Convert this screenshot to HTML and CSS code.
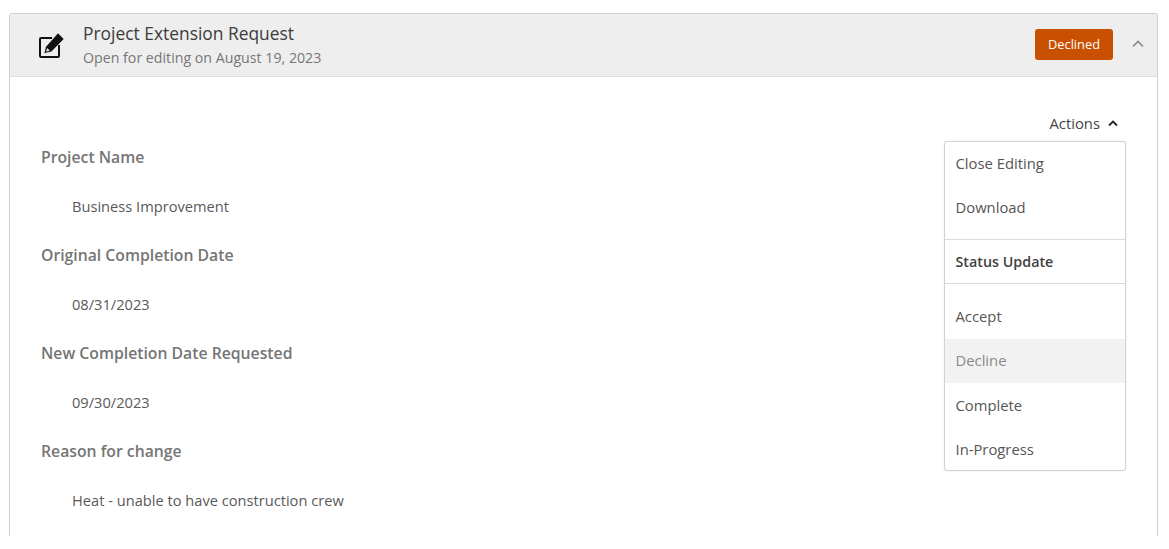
FILE: index.html

```html
<!DOCTYPE html>
<html>
<head>
    <meta charset="utf-8">
    <title>Project Extension Request</title>
    <link rel="stylesheet" href="styles.css">
</head>
<body>
    <div class="card">
        <div class="card-header">
            <svg class="edit-icon" width="27" height="27" viewBox="0 0 27 27">
                <path d="M14 6H3a1 1 0 0 0-1 1v17a1 1 0 0 0 1 1h17a1 1 0 0 0 1-1V13" fill="none" stroke="#111" stroke-width="2"/>
                <path d="M6 21.500l1.700-6.700L20 1l6 6-12.500 12.800zM8.500 19.300l2.800-.8-2-2z" fill="#111" stroke="#eee" stroke-width=".6" fill-rule="evenodd"/>
            </svg>
            <div class="title-block">
                <div class="title">Project Extension Request</div>
                <div class="subtitle">Open for editing on August 19, 2023</div>
            </div>
            <span class="badge">Declined</span>
            <svg class="chevron" width="12" height="8" viewBox="0 0 12 8">
                <path d="M1 6.500l5-5 5 5" fill="none" stroke="#888" stroke-width="1.600"/>
            </svg>
        </div>
        <div class="card-body">
            <div class="actions">
                Actions
                <svg width="10" height="7" viewBox="0 0 10 7">
                    <path d="M1 5.500l4-4 4 4" fill="none" stroke="#222" stroke-width="1.800"/>
                </svg>
            </div>
            <div class="menu">
                <div class="menu-group">
                    <div class="menu-item first">Close Editing</div>
                    <div class="menu-item first">Download</div>
                </div>
                <div class="menu-heading">Status Update</div>
                <div class="menu-group status">
                    <div class="menu-item">Accept</div>
                    <div class="menu-item active">Decline</div>
                    <div class="menu-item lower">Complete</div>
                    <div class="menu-item lower">In-Progress</div>
                </div>
            </div>
            <div class="field-label">Project Name</div>
            <div class="field-value">Business Improvement</div>
            <div class="field-label">Original Completion Date</div>
            <div class="field-value">08/31/2023</div>
            <div class="field-label">New Completion Date Requested</div>
            <div class="field-value">09/30/2023</div>
            <div class="field-label">Reason for change</div>
            <div class="field-value">Heat - unable to have construction crew</div>
        </div>
    </div>
</body>
</html>
```

FILE: styles.css

```css
body {
    margin: 0;
    padding: 13px 11px 13px 9px;
    background: #fff;
    font-family: "Open Sans", "Lato", sans-serif;
    color: #4a4a4a;
}
.card {
    height: 523px;
    box-sizing: border-box;
    border: 1px solid #d0d0d0;
    border-bottom: 0;
    border-radius: 3px 3px 0 0;
}
.card-header {
    display: flex;
    align-items: center;
    height: 60px;
    padding: 0 13px 2px 28px;
    background: #eeeeee;
    border-bottom: 1px solid #dedede;
}
.edit-icon {
    flex: none;
    margin: 2px 18px 0 0;
}
.title-block {
    flex: 1;
    margin-top: 2px;
}
.title {
    font-size: 17.400px;
    line-height: 20px;
    font-weight: 500;
    color: #3c3c3c;
}
.subtitle {
    font-size: 14.200px;
    line-height: 21px;
    margin-top: 4px;
    color: #777;
}
.badge {
    width: 78px;
    height: 31px;
    line-height: 31px;
    text-align: center;
    border-radius: 3px;
    background: #c85000;
    color: #fff;
    font-size: 12.800px;
    font-weight: 500;
}
.chevron {
    margin-left: 19px;
}
.card-body {
    position: relative;
    padding: 70px 31px 0;
}
.actions {
    position: absolute;
    top: 37px;
    right: 39px;
    display: flex;
    align-items: center;
    gap: 8px;
    font-size: 14.800px;
    line-height: 18px;
    color: #444;
}
.menu {
    position: absolute;
    top: 64px;
    right: 31px;
    width: 180px;
    background: #fff;
    border: 1px solid #d2d2d2;
    border-radius: 3px;
    box-shadow: 0 0 2px #e6e6e6;
    font-size: 14.800px;
}
.menu-group {
    padding-bottom: 8px;
}
.menu-item {
    height: 44.300px;
    line-height: 43px;
    padding: 0 10.500px;
    color: #555;
}
.menu-item.first {
    line-height: 43px;
}
.menu-item.lower {
    line-height: 45px;
}
.menu-item.active {
    background: #f2f2f2;
    color: #8a8a8a;
}
.menu-heading {
    height: 43px;
    line-height: 43px;
    padding: 0 10.500px;
    border-top: 1px solid #dcdcdc;
    border-bottom: 1px solid #d8d8d8;
    font-weight: 600;
    font-size: 14.300px;
    color: #3f3f3f;
}
.status {
    padding: 11px 0 0;
    height: 175px;
}
.field-label {
    height: 49px;
    line-height: 20px;
    font-size: 15.750px;
    font-weight: 600;
    color: #757575;
}
.field-value {
    height: 49px;
    line-height: 20px;
    padding-left: 31px;
    font-size: 14.650px;
    color: #5a5a5a;
}
```
